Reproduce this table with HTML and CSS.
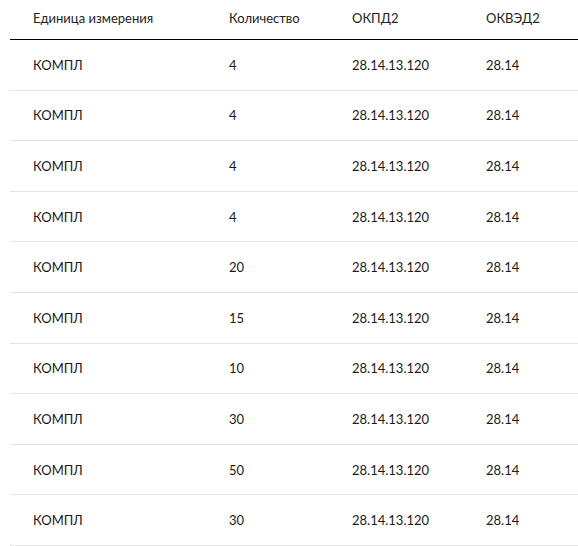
FILE: index.html
```html
<!DOCTYPE html>
<html lang="ru">
<head>
<meta charset="utf-8">
<link rel="stylesheet" href="styles.css">
</head>
<body>
<div class="table">
  <div class="row head">
    <div class="c c1">Единица измерения</div>
    <div class="c c2">Количество</div>
    <div class="c c3">ОКПД2</div>
    <div class="c c4">ОКВЭД2</div>
  </div>
  <div class="row"><div class="c c1">КОМПЛ</div><div class="c c2">4</div><div class="c c3">28.14.13.120</div><div class="c c4">28.14</div></div>
  <div class="row"><div class="c c1">КОМПЛ</div><div class="c c2">4</div><div class="c c3">28.14.13.120</div><div class="c c4">28.14</div></div>
  <div class="row"><div class="c c1">КОМПЛ</div><div class="c c2">4</div><div class="c c3">28.14.13.120</div><div class="c c4">28.14</div></div>
  <div class="row"><div class="c c1">КОМПЛ</div><div class="c c2">4</div><div class="c c3">28.14.13.120</div><div class="c c4">28.14</div></div>
  <div class="row"><div class="c c1">КОМПЛ</div><div class="c c2">20</div><div class="c c3">28.14.13.120</div><div class="c c4">28.14</div></div>
  <div class="row"><div class="c c1">КОМПЛ</div><div class="c c2">15</div><div class="c c3">28.14.13.120</div><div class="c c4">28.14</div></div>
  <div class="row"><div class="c c1">КОМПЛ</div><div class="c c2">10</div><div class="c c3">28.14.13.120</div><div class="c c4">28.14</div></div>
  <div class="row"><div class="c c1">КОМПЛ</div><div class="c c2">30</div><div class="c c3">28.14.13.120</div><div class="c c4">28.14</div></div>
  <div class="row"><div class="c c1">КОМПЛ</div><div class="c c2">50</div><div class="c c3">28.14.13.120</div><div class="c c4">28.14</div></div>
  <div class="row"><div class="c c1">КОМПЛ</div><div class="c c2">30</div><div class="c c3">28.14.13.120</div><div class="c c4">28.14</div></div>
</div>
</body>
</html>
```

FILE: styles.css
```css
html, body {
  margin: 0;
  padding: 0;
  background: #fff;
}
body {
  font-family: Lato, "Open Sans", sans-serif;
  color: #1a1a1a;
  overflow: hidden;
}
.table {
  margin-left: 10px;
}
.row {
  display: flex;
  align-items: center;
  height: 49.6px;
  padding-left: 23px;
  border-bottom: 1px solid #e4e4e4;
  font-size: 13px;
}
.row.head {
  height: 39px;
  border-bottom: 1px solid #000;
  font-size: 13px;
  color: #222;
  align-items: flex-start;
}
.head .c {
  padding-top: 10px;
}
.c {
  white-space: nowrap;
}
.c1 { width: 196px; }
.c2 { width: 123px; }
.c3 { width: 134px; }
.c4 { flex: 1; }
```
